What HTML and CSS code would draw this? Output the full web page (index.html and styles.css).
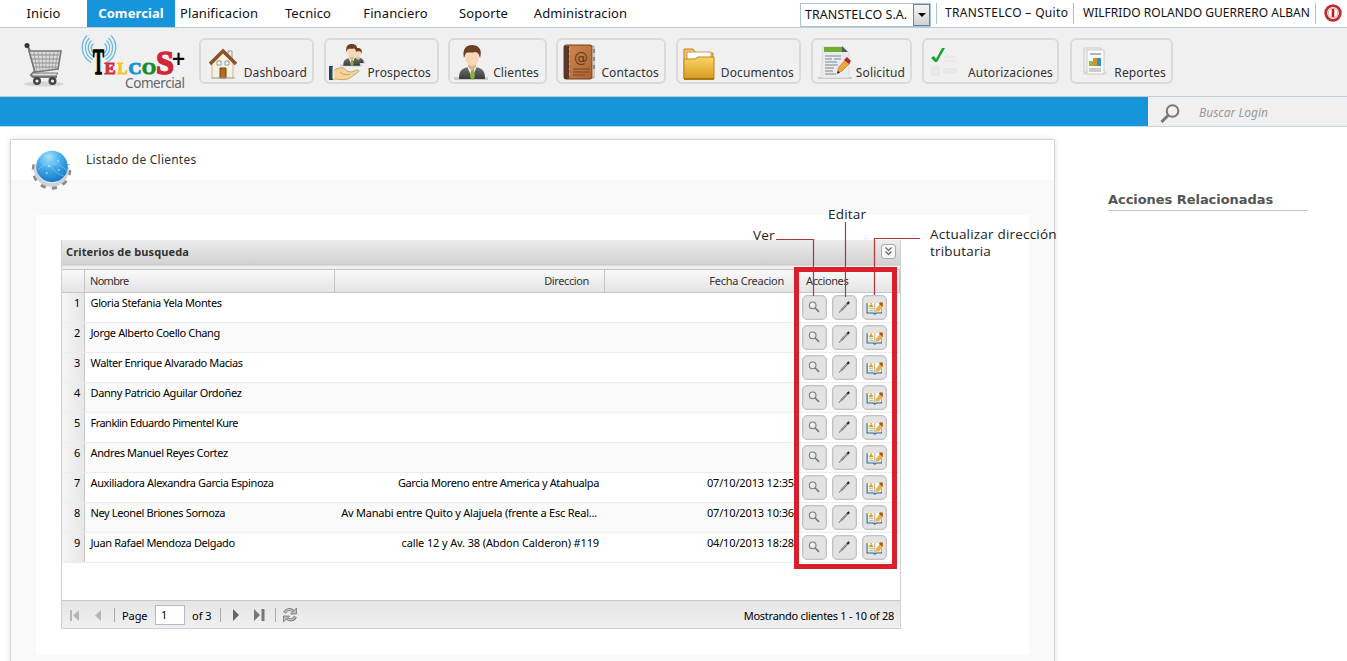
FILE: index.html
```html
<!DOCTYPE html>
<html lang="es">
<head>
<meta charset="utf-8">
<title>Listado de Clientes</title>
<link rel="stylesheet" href="styles.css">
</head>
<body>
<svg class="defs" aria-hidden="true">
  <defs>
    <linearGradient id="gold" x1="0" y1="0" x2="0" y2="1"><stop offset="0" stop-color="#f9d568"/><stop offset="1" stop-color="#d69a1c"/></linearGradient>
    <linearGradient id="suit" x1="0" y1="0" x2="0" y2="1"><stop offset="0" stop-color="#707274"/><stop offset="1" stop-color="#3a3b3d"/></linearGradient>
    <linearGradient id="leather" x1="0" y1="0" x2="1" y2="1"><stop offset="0" stop-color="#cf8a52"/><stop offset="1" stop-color="#ab6431"/></linearGradient>
    <radialGradient id="ball" cx=".4" cy=".2" r=".85"><stop offset="0" stop-color="#a6e0fb"/><stop offset=".45" stop-color="#42acec"/><stop offset="1" stop-color="#1573c0"/></radialGradient>
    <symbol id="person" viewBox="0 0 34 36">
      <path d="M0 32h34v3H0z" fill="#c9c9c9"/>
      <path d="M5 34c0-8 2-10 9-12h8c7 2 9 4 9 12z" fill="url(#suit)"/>
      <path d="M13 21l5 12 5-12z" fill="#fff"/><path d="M17 24h3l1 8-2.500 3-2.500-3z" fill="#8cae3c"/>
      <path d="M14 18h8v4l-4 4-4-4z" fill="#e0b28d"/>
      <ellipse cx="18" cy="12.500" rx="6.800" ry="8.500" fill="#f8d6b8"/>
      <path d="M10 13C8 4 12 0 18 0s11 4 8 13c-1-4-2-5-4-6-4 1-9 0-10 1z" fill="#6b4026"/>
    </symbol>
    <symbol id="ver" viewBox="0 0 25 25">
      <circle cx="10.500" cy="10.200" r="3.600" fill="#e9e9e9" stroke="#7c7c7c" stroke-width="1.200"/>
      <path d="M9 10a1.500 1.500 0 0 1 2-1.500" fill="none" stroke="#fff"/><path d="M13 12.800l4.400 4.400" stroke="#777" stroke-width="1.700"/>
    </symbol>
    <symbol id="editar" viewBox="0 0 25 25">
      <path d="M9 15.500L16 8" stroke="#777" stroke-width="2.300"/><path d="M9.100 15l6-6.300" stroke="#bbb" stroke-width=".8"/>
      <path d="M15.700 8.300L17.500 6.500" stroke="#222" stroke-width="2.300"/><path d="M6.500 18l3-3" stroke="#888" stroke-width="1.200"/>
    </symbol>
    <symbol id="libro" viewBox="0 0 25 25">
      <path d="M4.500 8v10.500h6.800l1.500 1.200 1.500-1.200H20V8" fill="#d7e9f5" stroke="#316b9b" stroke-width="1.300"/>
      <path d="M5.500 7.500c3-1 6-1 7.300.5 1.300-1.500 4-1.500 7.200-.5v9.800c-3-.8-5.500-.8-7.200.7-1.300-1.500-4.300-1.500-7.300-.7z" fill="#fffef5" stroke="#d8c99d" stroke-width=".5"/>
      <path d="M12.800 8v10" stroke="#888" stroke-width=".8"/>
      <path d="M7 10.500h3.500M6.500 11.500h4.500" stroke="#df9f25" stroke-width="1.500"/><circle cx="8.800" cy="8.700" r="1.200" fill="#e5ad39"/>
      <path d="M6.800 13.700h4.500M6.800 15.700h4.500" stroke="#94a58a" stroke-width=".8"/>
      <path d="M13.800 14l4.200-5 3.500 2.500-3.500 4.500-4.200 1z" fill="#eeb148"/><path d="M18 7h3.500v5L17.500 8.800z" fill="#a65319"/>
    </symbol>
  </defs>
</svg>

<header class="top">
  <nav class="nav">
    <a>Inicio</a><a class="on">Comercial</a><a>Planificacion</a><a>Tecnico</a><a>Financiero</a><a>Soporte</a><a>Administracion</a>
  </nav>
  <div class="session">
    <div class="company"><span>TRANSTELCO S.A.</span><i class="drop"><svg width="8" height="4"><path d="M0 0h8L4 4z"/></svg></i></div>
    <span class="office">TRANSTELCO – Quito</span>
    <span class="user">WILFRIDO ROLANDO GUERRERO ALBAN</span>
    <span class="power"><svg width="18" height="18" viewBox="0 0 18 18"><circle cx="9" cy="9" r="7.300" fill="#fff" stroke="#b93030" stroke-width="2.800"/><circle cx="9" cy="9" r="4.800" fill="none" stroke="#d98383" stroke-width=".8"/><path d="M9 5v8" stroke="#b02525" stroke-width="2.600"/></svg></span>
  </div>
</header>

<div class="tools">
  <svg class="cart" width="42" height="48" viewBox="0 0 42 48">
    <ellipse cx="22" cy="44" rx="20" ry="2.500" fill="#d5d5d5"/>
    <path d="M5 5l3 6 5 20-4 4 2 2h24" fill="none" stroke="#777" stroke-width="2.200"/>
    <circle cx="5" cy="5.500" r="2.500" fill="#333"/>
    <path d="M7 11h32l-3 18-23 3z" fill="#dcdcdc" stroke="#777" stroke-width="1.600"/>
    <path d="M9 15h28M10 19h27M11 23h25M12 27h23" stroke="#888" stroke-width="1.200"/>
    <path d="M12 12l3 19M16 12l2 19M20 12l1 19M24 12v19M28 11l-1 19M32 11l-2 19M36 11l-3 18" stroke="#999" stroke-width=".8"/>
    <path d="M10 33h26l-2 3H10z" fill="#ddd" stroke="#777"/>
    <g fill="#eee" stroke="#444" stroke-width="2.400"><circle cx="15" cy="41" r="2.800"/><circle cx="30.500" cy="41" r="2.800"/></g>
  </svg>
  <svg class="logo" width="108" height="60" viewBox="0 0 108 60">
    <g fill="none" stroke="#69b7e6" stroke-width="1.300">
      <path d="M12.500 9.500a6 6 0 0 0 1 10"/><path d="M10.500 6.500a10 10 0 0 0 2 16"/><path d="M8.500 4a13.500 13.500 0 0 0 3 21.500"/><path d="M6 1.500a17 17 0 0 0 4.500 27"/>
      <path d="M23.500 9.500a6 6 0 0 1-1 10"/><path d="M25.500 6.500a10 10 0 0 1-2 16"/><path d="M27.500 4a13.500 13.500 0 0 1-3 21.500"/><path d="M30 1.500a17 17 0 0 1-4.500 27"/>
    </g>
    <g class="mark">
      <text class="tee" x="12" y="40" font-size="36" textLength="11" lengthAdjust="spacingAndGlyphs">T</text>
      <text x="23.500" y="40" font-size="17" fill="#d52b3b" stroke="#d52b3b" textLength="11" lengthAdjust="spacingAndGlyphs">E</text>
      <text x="36.500" y="40" font-size="17" fill="#f5c51b" stroke="#f5c51b" textLength="10" lengthAdjust="spacingAndGlyphs">L</text>
      <text x="47.500" y="40" font-size="17" fill="#1795d4" stroke="#1795d4" textLength="13" lengthAdjust="spacingAndGlyphs">C</text>
      <text x="61" y="40" font-size="17" fill="#168c28" stroke="#168c28" textLength="14" lengthAdjust="spacingAndGlyphs">O</text>
      <text x="75" y="40" font-size="34" fill="#d52437" stroke="#d52437" stroke-width="1.500" textLength="18" lengthAdjust="spacingAndGlyphs">S</text>
      <text class="plus" x="90" y="31" font-size="19" textLength="15" lengthAdjust="spacingAndGlyphs">+</text>
    </g>
    <text class="mark-sub" x="44" y="54" textLength="60">Comercial</text>
  </svg>
  <div class="buttons">
    <a class="tool dash"><svg width="30" height="32" viewBox="0 0 30 32">
      <path d="M20 4h4v9h-4z" fill="#eee" stroke="#999"/><path d="M4 15L15 4l10 11v16H4z" fill="#f7f1df" stroke="#c5b79a"/>
      <path d="M2 17L15 4l13 13" fill="none" stroke="#8d5227" stroke-width="3.500"/>
      <path d="M12 21h6v10h-6z" fill="#b36d1d" stroke="#704316"/><path d="M9 14h4v4H9zM17 14h4v4h-4z" fill="#fff" stroke="#999"/><path d="M3 31h24" stroke="#aaa"/>
    </svg><span>Dashboard</span></a>
    <a class="tool pros"><svg width="36" height="38" viewBox="0 0 36 38">
      <use href="#person" x="21" y="3" width="15" height="18"/><use href="#person" x="11" y="0" width="22" height="23"/>
      <path d="M4 27c7-5 11-4 14 0l4 1 6-2c3 0 2 2 0 3l-7 5c-5 3-11 1-17 1z" fill="#f5d49b" stroke="#b78d49" stroke-width=".7"/><path d="M11 28c3 3 7 3 10 2" fill="none" stroke="#b78d49" stroke-width=".7"/><path d="M0 22h4v14H0z" fill="#1f4955"/><path d="M3.500 23h1.500v12H3.500z" fill="#eee"/>
    </svg><span>Prospectos</span></a>
    <a class="tool clie"><svg width="34" height="36"><use href="#person"/></svg><span>Clientes</span></a>
    <a class="tool cont"><svg width="33" height="36" viewBox="0 0 33 36">
      <path d="M27 2h4v32h-4z" fill="#fff" stroke="#999"/><path d="M31 5v4m0 4v4m0 4v4" stroke="#555" stroke-width="1"/>
      <rect x="1" y="1" width="28" height="34" rx="2" fill="url(#leather)" stroke="#70401f"/><path d="M1 2h5v33H1z" fill="#5b3825"/><path d="M6 5h1m-1 5h1m-1 5h1m-1 5h1m-1 5h1m-1 5h1" stroke="#ddd"/>
      <text class="at" x="11" y="18.500">@</text><path d="M10 25h17M10 28h17M10 31h12" stroke="#71421f" stroke-width=".9"/>
    </svg><span>Contactos</span></a>
    <a class="tool docu"><svg width="32" height="33" viewBox="0 0 32 33">
      <path d="M1 32V2h9l3 4h17v26z" fill="#edc66a" stroke="#b88729"/><path d="M4 5h24v8H4z" fill="#fff" stroke="#c59d60"/><path d="M1 12h11l3-2h16v22H1z" fill="url(#gold)" stroke="#bd861d"/><path d="M1 32h30" stroke="#9b6c12" stroke-width="1.500"/>
    </svg><span>Documentos</span></a>
    <a class="tool soli"><svg width="34" height="35" viewBox="0 0 34 35">
      <path d="M0 32h34v2H0z" fill="#ccc"/><path d="M5 2h20l6 6v25H3z" fill="#ebebeb" stroke="#d2d2d2" stroke-width=".6"/><path d="M6 2h18v5H6z" fill="#6eae32"/><path d="M24 1v6h6z" fill="#505c55"/>
      <path d="M7 11h16M7 14h7m2 0h7M7 17h12M7 20h13M7 23h9M7 26h8M7 29h11" stroke="#71869c" stroke-width="1"/>
      <path d="M19 28l2-6 7-8 4 4-8 8z" fill="#f0a83e" stroke="#b87622" stroke-width=".7"/><path d="M26 15l3-3 4 4-2 3z" fill="#b32532"/><path d="M19 29l1-3 2 1.500z" fill="#222"/>
    </svg><span>Solicitud</span></a>
    <a class="tool auto"><svg width="28" height="30" viewBox="0 0 28 30">
      <path d="M1 20h7v8H1zM13 22h12v4H13zM13 10h11M13 14h13" fill="#ebebeb" stroke="#e3e3e3"/><path d="M0 11l3-2 2 3 6-11h3L6 15H4z" fill="#1ca32b"/>
    </svg><span>Autorizaciones</span></a>
    <a class="tool repo"><svg width="26" height="30" viewBox="0 0 26 30">
      <path d="M1 26h24" stroke="#ddd" stroke-width="3"/><path d="M2 1h17v24H2z" fill="#eee" stroke="#ccc"/><path d="M5 3h17v24H5z" fill="#fafafa" stroke="#ccc"/><path d="M8 7h11" stroke="#999" stroke-width="1.500"/><path d="M7 14h4v5H7z" fill="#91bc47"/><path d="M11 11h4v8h-4z" fill="#df8c24"/><path d="M15 11h4v8h-4z" fill="#2b93c8"/><path d="M7 21h12v4H7z" fill="#ccc"/>
    </svg><span>Reportes</span></a>
  </div>
</div>

<div class="bar"><div class="search"><svg width="20" height="20" viewBox="0 0 20 20" fill="none" stroke="#777"><circle cx="12.500" cy="8" r="5.800" stroke-width="2"/><path d="M8 12.500L1.500 19" stroke-width="3"/></svg><span>Buscar Login</span></div></div>

<main class="main">
  <section class="card">
    <div class="card-head">
      <svg width="42" height="41" viewBox="0 0 42 41">
        <circle cx="20.500" cy="21" r="17.500" fill="none" stroke="#8c8c8c" stroke-width="4.500" stroke-dasharray="5 6"/><circle cx="20.500" cy="20.500" r="15.500" fill="none" stroke="#cdd3d8" stroke-width="4"/><path d="M0 0h42v15H0z" fill="#fff"/>
        <circle cx="21" cy="17.500" r="15.700" fill="url(#ball)"/><path d="M7 21c8-9 20-9 29 1M14 6c3 10 10 19 19 21M9 12l8 6 12-5" fill="none" stroke="#8bd0f7" stroke-width=".5"/><path d="M17 17h1.500M26 12h1.500M27 21h1.500M15 24h1.500" stroke="#fff" stroke-width="1.200"/>
      </svg>
      <span>Listado de Clientes</span>
    </div>
    <div class="panel">
      <div class="grid">
        <div class="grid-title"><b>Criterios de busqueda</b><i class="toggle"><svg width="13" height="13" viewBox="0 0 13 13" fill="none" stroke="#666" stroke-width="1.200"><path d="M3.500 2.500l3 3 3-3M3.500 6.500l3 3 3-3"/></svg></i></div>
        <div class="row heads"><span></span><span class="h-name">Nombre</span><span class="dir">Direccion</span><span class="date">Fecha Creacion</span><span class="h-act">Acciones</span></div>
        <div class="row"><span class="num">1</span><span class="name">Gloria Stefania Yela Montes</span><span class="dir"></span><span class="date"></span><span class="acts"><svg><use href="#ver"/></svg><svg><use href="#editar"/></svg><svg><use href="#libro"/></svg></span></div>
        <div class="row alt"><span class="num">2</span><span class="name">Jorge Alberto Coello Chang</span><span class="dir"></span><span class="date"></span><span class="acts"><svg><use href="#ver"/></svg><svg><use href="#editar"/></svg><svg><use href="#libro"/></svg></span></div>
        <div class="row"><span class="num">3</span><span class="name">Walter Enrique Alvarado Macias</span><span class="dir"></span><span class="date"></span><span class="acts"><svg><use href="#ver"/></svg><svg><use href="#editar"/></svg><svg><use href="#libro"/></svg></span></div>
        <div class="row alt"><span class="num">4</span><span class="name">Danny Patricio Aguilar Ordoñez</span><span class="dir"></span><span class="date"></span><span class="acts"><svg><use href="#ver"/></svg><svg><use href="#editar"/></svg><svg><use href="#libro"/></svg></span></div>
        <div class="row"><span class="num">5</span><span class="name tight">Franklin Eduardo Pimentel Kure</span><span class="dir"></span><span class="date"></span><span class="acts"><svg><use href="#ver"/></svg><svg><use href="#editar"/></svg><svg><use href="#libro"/></svg></span></div>
        <div class="row alt"><span class="num">6</span><span class="name">Andres Manuel Reyes Cortez</span><span class="dir"></span><span class="date"></span><span class="acts"><svg><use href="#ver"/></svg><svg><use href="#editar"/></svg><svg><use href="#libro"/></svg></span></div>
        <div class="row"><span class="num">7</span><span class="name">Auxiliadora Alexandra Garcia Espinoza</span><span class="dir">Garcia Moreno entre America y Atahualpa</span><span class="date">07/10/2013 12:35</span><span class="acts"><svg><use href="#ver"/></svg><svg><use href="#editar"/></svg><svg><use href="#libro"/></svg></span></div>
        <div class="row alt"><span class="num">8</span><span class="name">Ney Leonel Briones Sornoza</span><span class="dir cut">Av Manabi entre Quito y Alajuela (frente a Esc Real...</span><span class="date">07/10/2013 10:36</span><span class="acts"><svg><use href="#ver"/></svg><svg><use href="#editar"/></svg><svg><use href="#libro"/></svg></span></div>
        <div class="row"><span class="num">9</span><span class="name">Juan Rafael Mendoza Delgado</span><span class="dir wide">calle 12 y Av. 38 (Abdon Calderon) #119</span><span class="date">04/10/2013 18:28</span><span class="acts"><svg><use href="#ver"/></svg><svg><use href="#editar"/></svg><svg><use href="#libro"/></svg></span></div>
        <div class="pager">
          <svg class="p-first" width="11" height="11"><path d="M1 0h2v11H1zM10 0v11L4 5.500z" fill="#b5b5b5"/></svg>
          <svg class="p-prev" width="6" height="11"><path d="M6 0v11L0 5.500z" fill="#b5b5b5"/></svg>
          <i class="sep"></i><span class="p-label">Page</span><span class="p-num">1</span><span class="p-of">of 3</span><i class="sep"></i>
          <svg class="p-next" width="7" height="12"><path d="M1 0v12l6-6z" fill="#666"/></svg>
          <svg class="p-last" width="11" height="12"><path d="M0 0v12l6-6zM7.500 0h3v12h-3z" fill="#777"/></svg>
          <i class="sep"></i>
          <svg class="p-load" width="16" height="16" viewBox="0 0 16 16" fill="none"><g stroke="#777" stroke-width="3"><path d="M2.500 6c2-4 6-4.500 9-1.500M13.500 9.500c-2 4-6 4.500-9 1.500"/></g><g stroke="#ccc" stroke-width="1.200"><path d="M2.500 6c2-4 6-4.500 9-1.500M13.500 9.500c-2 4-6 4.500-9 1.500"/></g><path d="M14.500 1v6h-6zM1.500 15V9h6z" fill="#bbb" stroke="#777" stroke-width=".8"/></svg>
          <span class="p-info">Mostrando clientes 1 - 10 of 28</span>
        </div>
      </div>
    </div>
  </section>
  <aside class="side"><h2><span>Acciones Relacionadas</span></h2></aside>
</main>

<div class="notes">
  <svg width="1347" height="661" fill="none" stroke="#b5343c" stroke-width="1.200"><path d="M776 239.500h37.500V296M845.500 222v75M920 238.500h-45.500V295"/><rect x="796.500" y="269.500" width="98" height="297" stroke="#db1f2a" stroke-width="5"/></svg>
  <span class="note n-ver">Ver</span><span class="note n-edit">Editar</span><span class="note n-dir">Actualizar dirección<br>tributaria</span>
</div>
</body>
</html>
```
FILE: styles.css
```css
* { box-sizing: border-box; }
body { margin: 0; width: 1347px; height: 661px; overflow: hidden; position: relative; background: #fff; color: #111; font-family: "Noto Sans", "Open Sans", sans-serif; font-size: 12.5px; }
span, b, a { white-space: nowrap; }
svg { display: block; flex: none; }
.defs { position: absolute; width: 0; height: 0; }

.top { display: flex; justify-content: space-between; height: 28px; border-bottom: 1px solid #bccad6; }
.nav { display: grid; grid-template-columns: 87px 88px 88px 90px 85px 91px 103px; line-height: 27px; text-align: center; font-size: 13px; letter-spacing: .1px; }
.nav .on { background: #1795da; color: #fff; font-weight: bold; }
.session { display: flex; align-items: flex-start; }
.company { display: flex; width: 131px; height: 24px; margin: 3px 5px 0 0; border: 1px solid #aac3d5; line-height: 22px; }
.company span { flex: 1; padding-left: 4px; letter-spacing: .05px; }
.drop { display: flex; align-items: center; justify-content: center; width: 17px; height: 22px; border: 1px solid #708090; background: linear-gradient(#f5f5f5, #cfd2d6); }
.office, .user { height: 21px; margin-top: 3px; line-height: 20px; border-right: 1px solid #bbb; font-size: 12px; }
.office { width: 138px; padding-left: 8px; border-left: 1px solid #aac3d5; letter-spacing: .33px; }
.user { width: 242px; padding-left: 9px; letter-spacing: .03px; }
.power { padding: 4px 5px 0 8px; }

.tools { display: flex; height: 69px; background: #f0f0f0; border-bottom: 1px solid #c0cbd6; }
.cart { margin: 12px 0 0 22px; }
.logo { margin: 6px 0 0 17px; overflow: visible; }
.mark { font-family: "Liberation Serif", serif; font-weight: bold; }
.tee { stroke: #000; stroke-width: 1.5px; }
.plus { font-family: "DejaVu Sans", sans-serif; }
.mark-sub { font-size: 13.5px; fill: #666; }
.buttons { display: flex; margin: 10px 0 0 10px; }
.tool { display: flex; justify-content: space-between; height: 46px; padding: 5px 5px 0 5px; border: 2px solid #dadada; border-radius: 6px; color: #333; font-size: 12px; letter-spacing: .13px; }
.tool span { margin-top: 19px; line-height: 18px; }
.dash { width: 115px; padding-left: 7px; margin-right: 10px; }
.dash svg { margin-top: 2px; }
.pros { width: 115px; padding-left: 3px; padding-right: 6px; margin-right: 9px; }
.pros svg { margin-top: -1px; }
.clie { width: 99px; padding-left: 4px; padding-right: 6px; margin-right: 9px; }
.cont { width: 110px; margin-right: 10px; }
.cont svg { margin-top: -1px; }
.docu { width: 125px; margin-right: 10px; }
.docu svg { margin-top: 2px; }
.soli { width: 101px; margin-right: 10px; }
.auto { width: 137px; padding-left: 7px; padding-right: 4px; margin-right: 11px; }
.auto svg { margin-top: 2px; }
.repo { width: 103px; padding-left: 10px; }
.repo svg { margin-top: 2px; }
.at { font: 14px "DejaVu Sans", sans-serif; fill: #633817; }

.bar { display: flex; justify-content: flex-end; height: 30px; background: #1795da; border-bottom: 1px solid #c0d8e8; }
.search { display: flex; align-items: center; gap: 19px; width: 199px; padding: 2px 0 0 12px; background: #f0f0f0; color: #999; font-style: italic; font-size: 12px; }

.main { display: flex; align-items: flex-start; padding: 12px 0 0 10px; }
.card { width: 1045px; height: 540px; border: 1px solid #d5d5d5; box-shadow: 0 0 5px #ddd; background: #f9f9f9; }
.card-head { display: flex; height: 40px; padding: 9px 0 0 20px; background: #fff; color: #333; font-size: 12px; line-height: 22px; gap: 13px; letter-spacing: .23px; }
.card-head svg { position: relative; z-index: 1; }
.panel { width: 993px; height: 440px; margin: 35px 0 0 25px; padding: 25px; background: #fff; }
.grid { width: 840px; height: 389px; display: flex; flex-direction: column; border: 1px solid #cfcfcf; font-size: 11px; color: #000; letter-spacing: -.38px; }
.grid-title { display: flex; justify-content: space-between; height: 29px; margin-top: -1px; padding: 0 4px 5px 4px; color: #333; line-height: 23px; letter-spacing: .13px; background: linear-gradient(#ececec, #d2d2d2 24px, #c6c6c6 25px, #efefef 26px); }
.toggle { width: 15px; height: 15px; margin-top: 4px; border: 1px solid #aaa; border-radius: 3px; background: #f7f7f7; }
.row { display: grid; grid-template-columns: 23px 250px 270px 195px 100px; height: 30px; border-bottom: 1px solid #ededed; line-height: 20px; }
.alt { background: #fafafa; }
.heads { height: 24px; line-height: 21px; border-top: 1px solid #c5c5c5; border-bottom: 1px solid #c5c5c5; background: linear-gradient(#f9f9f9, #e3e4e6); color: #333; }
.heads > span { border-right: 1px solid #c5c5c5; }
.heads .date { border-right: 0; }
.row .h-name { padding-left: 5px; letter-spacing: -.7px; }
.row .name { padding-left: 5.5px; }
.row .tight { letter-spacing: -.53px; }
.row .dir { padding-right: 6px; text-align: right; }
.row .cut { padding-right: 8px; letter-spacing: -.23px; }
.row .wide { letter-spacing: -.13px; }
.heads .dir { padding-right: 15px; }
.row .date { padding-right: 6px; text-align: right; letter-spacing: -.15px; }
.heads .date { padding-right: 16px; letter-spacing: -.25px; }
.h-act { padding-left: 6px; }
.num { height: 29px; padding-right: 4px; border-right: 1px solid #c8c8c8; text-align: right; background: linear-gradient(90deg, #f5f5f5, #e6e7e9); }
.acts { display: flex; gap: 5px; padding: 2px 0 0 2px; }
.acts svg { width: 25px; height: 25px; border: 1px solid #c2c2c2; border-radius: 5px; background: #e3e3e3; box-shadow: inset 0 0 0 .5px #ccc; }
.acts use { width: 25px; height: 25px; }
.pager { display: flex; align-items: center; height: 28px; margin-top: auto; padding: 1px 6px 0 7px; border-top: 1px solid #c9c9c9; background: linear-gradient(#e5e5e5, #f0f0f0); letter-spacing: -.27px; }
.p-prev { margin: 0 13px 0 15px; }
.sep { width: 1px; height: 14px; background: #aaa; }
.p-label { margin-left: 7px; width: 33px; letter-spacing: -.1px; }
.p-num { width: 30px; height: 20px; padding-left: 5px; line-height: 18px; border: 1px solid #b5b8c8; background: #fff; }
.p-of { width: 28px; margin-left: 7px; letter-spacing: 0; }
.p-next { margin: 0 15px 0 11px; }
.p-last { margin-right: 10px; }
.p-load { margin-left: 6px; }
.p-info { margin-left: auto; }
.side { padding: 52px 0 0 53px; }
.side h2 { width: 200px; height: 20px; margin: 0; border-bottom: 1px solid #c5c5c5; color: #555; font: bold 13px/17px "DejaVu Sans", sans-serif; letter-spacing: -.05px; }

.notes { position: absolute; left: 0; top: 0; color: #222; font: 13.5px/17px "Open Sans", sans-serif; letter-spacing: .2px; }
.note { position: absolute; }
.n-ver { left: 753px; top: 227px; }
.n-edit { left: 828px; top: 206px; }
.n-dir { left: 930px; top: 226px; }
```
